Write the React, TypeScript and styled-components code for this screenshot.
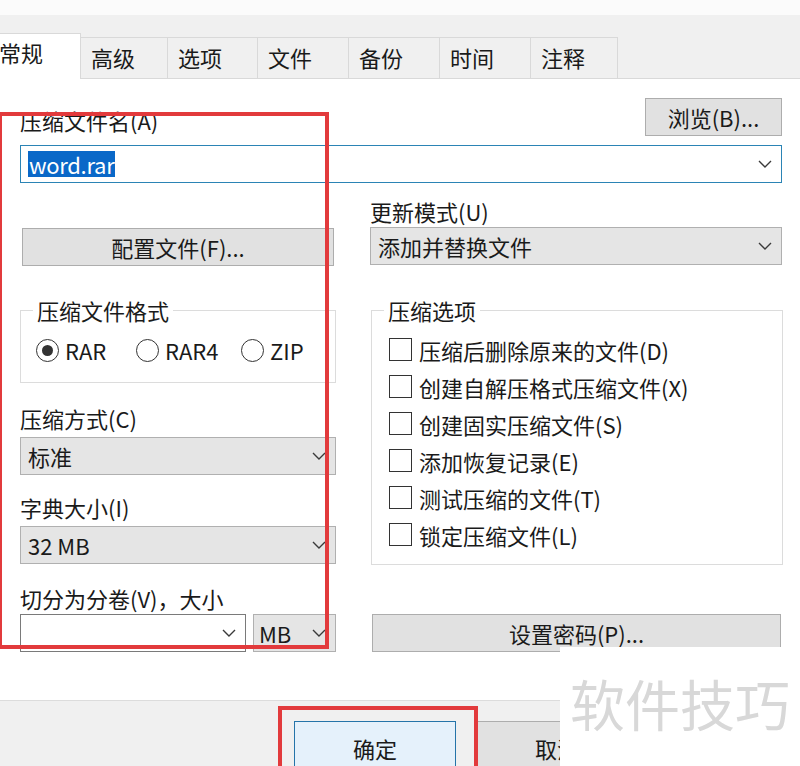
import styled, { createGlobalStyle } from 'styled-components';

const GlobalStyle = createGlobalStyle`
  html, body {
    margin: 0;
    padding: 0;
    background: #fff;
  }
  body {
    font-family: "Noto Sans CJK SC", "Microsoft YaHei", sans-serif;
  }
`;

const Dialog = styled.div`
  position: relative;
  width: 800px;
  height: 766px;
  overflow: hidden;
  background: #fff;
  color: #1a1a1a;
  font-family: "Noto Sans CJK SC", "Microsoft YaHei", sans-serif;
  font-size: 22px;
  display: flex;
  flex-direction: column;
`;

const TopGap = styled.div`
  flex: none;
  height: 15px;
  background: #fbfbfb;
`;

const TabStrip = styled.div`
  flex: none;
  box-sizing: border-box;
  height: 64px;
  background: #f0f0f0;
  border-bottom: 1px solid #d9d9d9;
  display: flex;
  align-items: flex-end;
`;

const Tab = styled.div<{ $active?: boolean; $w: number }>`
  position: relative;
  z-index: ${(p) => (p.$active ? 1 : 0)};
  box-sizing: border-box;
  flex: none;
  width: ${(p) => p.$w}px;
  height: ${(p) => (p.$active ? 46 : 41)}px;
  margin-left: ${(p) => (p.$active ? -12 : 0)}px;
  margin-bottom: ${(p) => (p.$active ? -1 : 0)}px;
  padding: ${(p) => (p.$active ? 5 : 6)}px 0 0 ${(p) => (p.$active ? 11 : 10)}px;
  background: ${(p) => (p.$active ? '#fff' : '#f0f0f0')};
  border-top: 1px solid #d9d9d9;
  border-right: 1px solid #d9d9d9;
  line-height: 26px;
  white-space: nowrap;
`;

const Body = styled.div`
  flex: 1;
  padding: 19px 18px 0 20px;
`;

const NameRow = styled.div`
  display: flex;
  justify-content: space-between;
  align-items: flex-end;
`;

const Label = styled.div<{ $top?: number; $bottom?: number }>`
  margin-top: ${(p) => p.$top ?? 0}px;
  margin-bottom: ${(p) => p.$bottom ?? 2}px;
  line-height: 28px;
  white-space: nowrap;
`;

const Button = styled.div<{ $w?: number; $top?: number; $ml?: number; $mr?: number }>`
  box-sizing: border-box;
  ${(p) => (p.$w ? `width: ${p.$w}px;` : '')}
  margin: ${(p) => p.$top ?? 0}px ${(p) => p.$mr ?? 0}px 0 ${(p) => p.$ml ?? 0}px;
  height: 38px;
  background: #e1e1e1;
  border: 1px solid #adadad;
  display: flex;
  align-items: center;
  justify-content: center;
  white-space: nowrap;
`;

const Combo = styled.div<{ $white?: boolean; $focus?: boolean; $w?: number; $pl?: number; $top?: number }>`
  box-sizing: border-box;
  ${(p) => (p.$w ? `width: ${p.$w}px; flex: none;` : '')}
  margin-top: ${(p) => p.$top ?? 0}px;
  height: 38px;
  background: ${(p) => (p.$white || p.$focus ? '#fff' : '#e5e5e5')};
  border: ${(p) => (p.$focus ? '1.5px solid #2b84b5' : p.$white ? '1px solid #7a7a7a' : '1px solid #b0b0b0')};
  display: flex;
  align-items: center;
  justify-content: space-between;
  padding: 0 9px 0 ${(p) => p.$pl ?? 7}px;
  white-space: nowrap;
`;

const Selected = styled.span`
  background: #0a68c8;
  color: #fff;
  line-height: 26px;
  padding: 0 1px;
  letter-spacing: -0.3px;
`;

const Columns = styled.div`
  display: grid;
  grid-template-columns: 316px 412px;
  column-gap: 34px;
  align-items: start;
`;

const Column = styled.div`
  display: flex;
  flex-direction: column;
`;

const GroupBox = styled.div<{ $top: number; $ml?: number; $mr?: number }>`
  margin: ${(p) => p.$top}px ${(p) => p.$mr ?? 0}px 0 ${(p) => p.$ml ?? 0}px;
  border: 1px solid #dcdcdc;
`;

const Legend = styled.div`
  width: fit-content;
  margin: -13px 0 0 12px;
  padding: 0 4px;
  background: #fff;
  line-height: 24px;
`;

const RadioRow = styled.div`
  display: grid;
  grid-template-columns: 100px 105px auto;
  align-items: center;
  height: 30px;
  margin-top: 13px;
  padding: 0 0 17px 15px;
`;

const RadioItem = styled.div`
  display: flex;
  align-items: center;
  gap: 6px;
  line-height: 30px;
`;

const RadioCircle = styled.span<{ $on?: boolean }>`
  box-sizing: border-box;
  width: 23px;
  height: 23px;
  border: 1.5px solid #333;
  border-radius: 50%;
  display: flex;
  align-items: center;
  justify-content: center;
  &::after {
    content: '';
    display: ${(p) => (p.$on ? 'block' : 'none')};
    width: 11px;
    height: 11px;
    border-radius: 50%;
    background: #333;
  }
`;

const CheckList = styled.div`
  margin-top: 9px;
  padding: 0 0 11px 17px;
`;

const CheckRow = styled.div`
  display: flex;
  align-items: center;
  gap: 7px;
  height: 37px;
  white-space: nowrap;
`;

const CheckBox = styled.span`
  box-sizing: border-box;
  flex: none;
  width: 23px;
  height: 23px;
  border: 1.5px solid #333;
  background: #fff;
`;

const VolumeRow = styled.div`
  display: flex;
  gap: 7px;
`;

const Footer = styled.div`
  flex: none;
  box-sizing: border-box;
  height: 66px;
  background: #f0f0f0;
  border-top: 1px solid #dcdcdc;
  padding: 20px 0 0 294px;
  display: flex;
  gap: 20px;
`;

const FooterButton = styled.div<{ $primary?: boolean }>`
  box-sizing: border-box;
  width: 162px;
  height: 48px;
  padding-top: 11px;
  line-height: 30px;
  text-align: center;
  background: ${(p) => (p.$primary ? '#e5f1fb' : '#e1e1e1')};
  border: 1px solid ${(p) => (p.$primary ? '#2574a9' : '#adadad')};
`;

const Watermark = styled.div`
  position: absolute;
  right: 0;
  bottom: 0;
  width: 240px;
  height: 119px;
  background: #fff;
  box-sizing: border-box;
  padding: 0 0 8px 10px;
  display: flex;
  align-items: center;
  font-size: 55px;
  line-height: 1;
  color: #d8d8d8;
  white-space: nowrap;
`;

const Highlight = styled.div<{ $x: number; $y: number; $w: number; $h: number }>`
  position: absolute;
  left: ${(p) => p.$x}px;
  top: ${(p) => p.$y}px;
  width: ${(p) => p.$w}px;
  height: ${(p) => p.$h}px;
  box-sizing: border-box;
  border: 4px solid #e23a3c;
  pointer-events: none;
`;

const Chevron = () => (
  <svg width="14" height="8" viewBox="0 0 14 8" fill="none">
    <path d="M1 1 L7 7 L13 1" stroke="#3a3a3a" strokeWidth="1.4" />
  </svg>
);

const tabs = [
  { label: '常规', w: 93, active: true },
  { label: '高级', w: 87 },
  { label: '选项', w: 90 },
  { label: '文件', w: 91 },
  { label: '备份', w: 91 },
  { label: '时间', w: 91 },
  { label: '注释', w: 87 },
];

const options = [
  '压缩后删除原来的文件(D)',
  '创建自解压格式压缩文件(X)',
  '创建固实压缩文件(S)',
  '添加恢复记录(E)',
  '测试压缩的文件(T)',
  '锁定压缩文件(L)',
];

export default function App() {
  return (
    <>
      <GlobalStyle />
      <Dialog>
        <TopGap />
        <TabStrip>
          {tabs.map((t) => (
            <Tab key={t.label} $active={t.active} $w={t.w}>
              {t.label}
            </Tab>
          ))}
        </TabStrip>

        <Body>
          <NameRow>
            <Label>压缩文件名(A)</Label>
            <Button $w={137}>浏览(B)...</Button>
          </NameRow>
          <Combo $focus $top={9}>
            <Selected>word.rar</Selected>
            <Chevron />
          </Combo>

          <Columns>
            <Column>
              <Button $top={45} $ml={2} $mr={2}>
                配置文件(F)...
              </Button>
              <GroupBox $top={44}>
                <Legend>压缩文件格式</Legend>
                <RadioRow>
                  <RadioItem>
                    <RadioCircle $on />
                    RAR
                  </RadioItem>
                  <RadioItem>
                    <RadioCircle />
                    RAR4
                  </RadioItem>
                  <RadioItem>
                    <RadioCircle />
                    ZIP
                  </RadioItem>
                </RadioRow>
              </GroupBox>

              <Label $top={21} $bottom={5}>压缩方式(C)</Label>
              <Combo>
                标准
                <Chevron />
              </Combo>

              <Label $top={18} $bottom={5}>字典大小(I)</Label>
              <Combo>
                32 MB
                <Chevron />
              </Combo>

              <Label $top={20}>切分为分卷(V)，大小</Label>
              <VolumeRow>
                <Combo $white $w={226}>
                  <span />
                  <Chevron />
                </Combo>
                <Combo $w={83} $pl={5}>
                  MB
                  <Chevron />
                </Combo>
              </VolumeRow>
            </Column>

            <Column>
              <Label $top={14}>更新模式(U)</Label>
              <Combo>
                添加并替换文件
                <Chevron />
              </Combo>

              <GroupBox $top={45} $ml={1} $mr={-1}>
                <Legend>压缩选项</Legend>
                <CheckList>
                  {options.map((o) => (
                    <CheckRow key={o}>
                      <CheckBox />
                      {o}
                    </CheckRow>
                  ))}
                </CheckList>
              </GroupBox>

              <Button $top={49} $ml={2} $mr={1}>
                设置密码(P)...
              </Button>
            </Column>
          </Columns>
        </Body>

        <Footer>
          <FooterButton $primary>确定</FooterButton>
          <FooterButton>取消</FooterButton>
        </Footer>

        <Watermark>软件技巧</Watermark>
        <Highlight $x={-2} $y={112} $w={331} $h={537} />
        <Highlight $x={278} $y={706} $w={200} $h={90} />
      </Dialog>
    </>
  );
}
